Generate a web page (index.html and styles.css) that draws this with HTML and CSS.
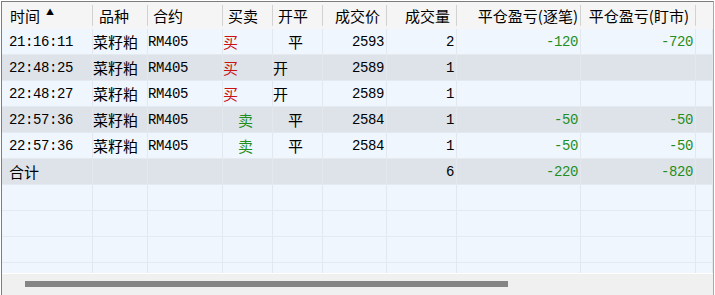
FILE: index.html
```html
<!DOCTYPE html>
<html lang="zh-CN">
<head>
    <meta charset="UTF-8">
    <meta name="viewport" content="width=device-width, initial-scale=1.0">
    <title>成交记录</title>
    <link rel="stylesheet" href="styles.css">
</head>
<body>
    <div class="grid">
        <div class="row head">
            <div class="c col-time">时间 <span class="sort">▲</span></div>
            <div class="c col-kind">品种</div>
            <div class="c col-code">合约</div>
            <div class="c col-side">买卖</div>
            <div class="c col-oc">开平</div>
            <div class="c r">成交价</div>
            <div class="c r">成交量</div>
            <div class="c r wide">平仓盈亏(逐笔)</div>
            <div class="c r">平仓盈亏(盯市)</div>
            <div class="c last"></div>
        </div>

        <div class="body">
            <div class="row">
                <div class="c num col-time">21:16:11</div>
                <div class="c">菜籽粕</div>
                <div class="c num">RM405</div>
                <div class="c buy">买</div>
                <div class="c ind">平</div>
                <div class="c num r">2593</div>
                <div class="c num r">2</div>
                <div class="c num r pl">-120</div>
                <div class="c num r pl">-720</div>
                <div class="c"></div>
            </div>
            <div class="row alt">
                <div class="c num col-time">22:48:25</div>
                <div class="c">菜籽粕</div>
                <div class="c num">RM405</div>
                <div class="c buy">买</div>
                <div class="c">开</div>
                <div class="c num r">2589</div>
                <div class="c num r">1</div>
                <div class="c"></div>
                <div class="c"></div>
                <div class="c"></div>
            </div>
            <div class="row">
                <div class="c num col-time">22:48:27</div>
                <div class="c">菜籽粕</div>
                <div class="c num">RM405</div>
                <div class="c buy">买</div>
                <div class="c">开</div>
                <div class="c num r">2589</div>
                <div class="c num r">1</div>
                <div class="c"></div>
                <div class="c"></div>
                <div class="c"></div>
            </div>
            <div class="row alt">
                <div class="c num col-time">22:57:36</div>
                <div class="c">菜籽粕</div>
                <div class="c num">RM405</div>
                <div class="c sell ind">卖</div>
                <div class="c ind">平</div>
                <div class="c num r">2584</div>
                <div class="c num r">1</div>
                <div class="c num r pl">-50</div>
                <div class="c num r pl">-50</div>
                <div class="c"></div>
            </div>
            <div class="row">
                <div class="c num col-time">22:57:36</div>
                <div class="c">菜籽粕</div>
                <div class="c num">RM405</div>
                <div class="c sell ind">卖</div>
                <div class="c ind">平</div>
                <div class="c num r">2584</div>
                <div class="c num r">1</div>
                <div class="c num r pl">-50</div>
                <div class="c num r pl">-50</div>
                <div class="c"></div>
            </div>
            <div class="row alt">
                <div class="c col-time">合计</div>
                <div class="c"></div>
                <div class="c"></div>
                <div class="c"></div>
                <div class="c"></div>
                <div class="c"></div>
                <div class="c num r">6</div>
                <div class="c num r pl">-220</div>
                <div class="c num r pl">-820</div>
                <div class="c"></div>
            </div>
            <div class="row empty">
                <div class="c"></div><div class="c"></div><div class="c"></div><div class="c"></div><div class="c"></div>
                <div class="c"></div><div class="c"></div><div class="c"></div><div class="c"></div><div class="c"></div>
            </div>
            <div class="row empty">
                <div class="c"></div><div class="c"></div><div class="c"></div><div class="c"></div><div class="c"></div>
                <div class="c"></div><div class="c"></div><div class="c"></div><div class="c"></div><div class="c"></div>
            </div>
            <div class="row empty">
                <div class="c"></div><div class="c"></div><div class="c"></div><div class="c"></div><div class="c"></div>
                <div class="c"></div><div class="c"></div><div class="c"></div><div class="c"></div><div class="c"></div>
            </div>
            <div class="row empty">
                <div class="c"></div><div class="c"></div><div class="c"></div><div class="c"></div><div class="c"></div>
                <div class="c"></div><div class="c"></div><div class="c"></div><div class="c"></div><div class="c"></div>
            </div>
        </div>

        <div class="hscroll">
            <div class="thumb"></div>
        </div>
    </div>
</body>
</html>
```

FILE: styles.css
```css
body {
    margin: 0;
    background: #ffffff;
    font-family: "Noto Sans CJK SC", "Noto Sans", sans-serif;
    color: #000;
}
.grid {
    box-sizing: border-box;
    width: 713px;
    height: 294px;
    margin: 1px 0 0 1px;
    border-top: 1px solid #7d7d7d;
    border-left: 1px solid #7d7d7d;
    border-right: 1px solid #a9a9a9;
    display: flex;
    flex-direction: column;
    overflow: hidden;
}
.row {
    display: grid;
    grid-template-columns: 91px 55px 75px 50px 50px 64px 70px 124px 115px 1fr;
}
.c {
    box-sizing: border-box;
    display: flex;
    align-items: center;
    white-space: nowrap;
    overflow: hidden;
    font-size: 15px;
    line-height: 1;
}
.r {
    justify-content: flex-end;
}

/* header */
.head {
    height: 27px;
    flex: none;
    background: #f5f5f5;
}
.head .c {
    padding: 0 7px 1px 5px;
    background: linear-gradient(#d2d2d2, #d2d2d2) right 3px / 1px 21px no-repeat;
}
.head .col-time {
    padding-left: 8px;
}
.head .col-kind {
    padding-left: 6px;
}
.head .wide {
    padding-right: 3px;
}
.head .last {
    background: none;
}
.sort {
    font-size: 8px;
    margin: -6px 0 0 6px;
}

/* body */
.body {
    flex: 1;
    overflow: hidden;
    background: #eff6fd;
}
.body .row {
    height: 26px;
    box-sizing: border-box;
    border-bottom: 1px solid #e5eaf0;
}
.body .row.alt {
    background: #dee3e9;
}
.body .c {
    border-right: 1px solid #e3e8ee;
    padding: 0 2px 0 0;
}
.body .col-time {
    padding-left: 7px;
}
.num {
    font-family: "Liberation Mono", monospace;
    font-size: 14px;
    letter-spacing: -0.4px;
}
.ind {
    padding-left: 15px !important;
}
.buy {
    color: #cc1111;
}
.sell {
    color: #1f8f1f;
}
.pl {
    color: #1f8f1f;
}

/* horizontal scroll bar */
.hscroll {
    flex: none;
    height: 22px;
    box-sizing: border-box;
    border-top: 1px solid #ffffff;
    background: #f0f0f0;
    padding: 7px 0 0 23px;
}
.thumb {
    width: 483px;
    height: 6px;
    background: #858585;
}
```
